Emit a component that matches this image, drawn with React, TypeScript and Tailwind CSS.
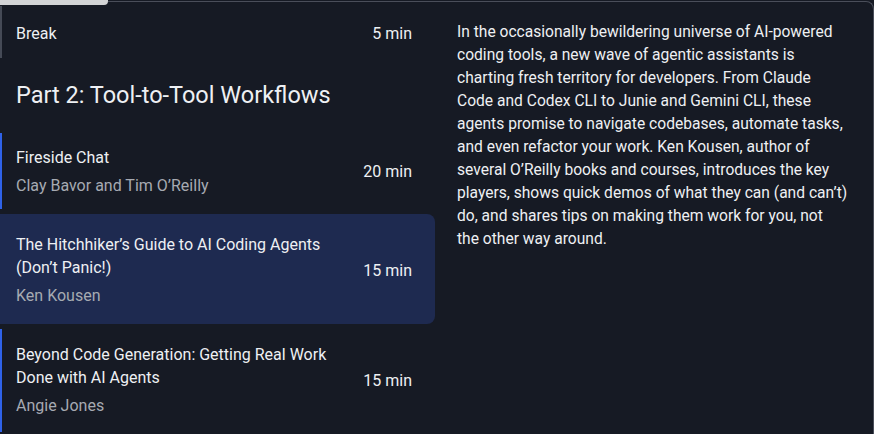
const sessions = [
  {
    title: "Fireside Chat",
    speaker: "Clay Bavor and Tim O\u2019Reilly",
    time: "20 min",
    active: false,
    pad: "pt-[13px] pb-[12px]",
  },
  {
    title: "The Hitchhiker\u2019s Guide to AI Coding Agents (Don\u2019t Panic!)",
    speaker: "Ken Kousen",
    time: "15 min",
    active: true,
    pad: "pt-[19px] pb-[17px]",
  },
  {
    title: "Beyond Code Generation: Getting Real Work Done with AI Agents",
    speaker: "Angie Jones",
    time: "15 min",
    active: false,
    pad: "pt-[14px] pb-[15px]",
  },
];

// wrapped the same way as the original description
const blurb = [
  "In the occasionally bewildering universe of AI-powered",
  "coding tools, a new wave of agentic assistants is",
  "charting fresh territory for developers. From Claude",
  "Code and Codex CLI to Junie and Gemini CLI, these",
  "agents promise to navigate codebases, automate tasks,",
  "and even refactor your work. Ken Kousen, author of",
  "several O\u2019Reilly books and courses, introduces the key",
  "players, shows quick demos of what they can (and can\u2019t)",
  "do, and shares tips on making them work for you, not",
  "the other way around.",
];

export default function App() {
  return (
    <div className="relative h-[434px] w-[874px] overflow-hidden bg-[#161a24] text-[16px] leading-[23px] text-[#eef0f3] font-['Roboto',sans-serif]">
      {/* cut-off tooltip peeking in at the top */}
      <div className="absolute left-0 top-0 z-10 h-[5px] w-[108px] rounded-br-[4px] bg-[#d3d4d6]" />

      <div className="mt-px flex h-full rounded-tr-[8px] border-t border-r border-[#4a4e5a]">
        <div className="mt-px flex w-[435px] shrink-0 flex-col">
          <div className="mt-[3px] flex items-center justify-between border-l-2 border-[#454a56] pt-[16px] pb-[13px] pl-[14px] pr-[23px]">
            <span>Break</span>
            <span>5 min</span>
          </div>

          <h2 className="mt-[22px] mb-[23px] pl-4 text-[23.5px] leading-[30px]">
            Part 2: Tool-to-Tool Workflows
          </h2>

          <div className="flex flex-col gap-[5px]">
            {sessions.map((s) => (
              <div
                key={s.title}
                className={
                  s.active
                    ? `flex items-center justify-between rounded-r-[8px] bg-[#1e2a50] pl-4 pr-[23px] ${s.pad}`
                    : `flex items-center justify-between border-l-2 border-[#2f62e8] pl-[14px] pr-[23px] ${s.pad}`
                }
              >
                <div className="w-[320px]">
                  <div>{s.title}</div>
                  <div className="mt-[5px] text-[#a6aab2]">{s.speaker}</div>
                </div>
                <span>{s.time}</span>
              </div>
            ))}
          </div>
        </div>

        <p className="ml-[22px] w-[410px] pt-[19px] text-[15.6px]">
          {blurb.map((line) => (
            <span key={line} className="block whitespace-nowrap">
              {line}
            </span>
          ))}
        </p>
      </div>
    </div>
  );
}
